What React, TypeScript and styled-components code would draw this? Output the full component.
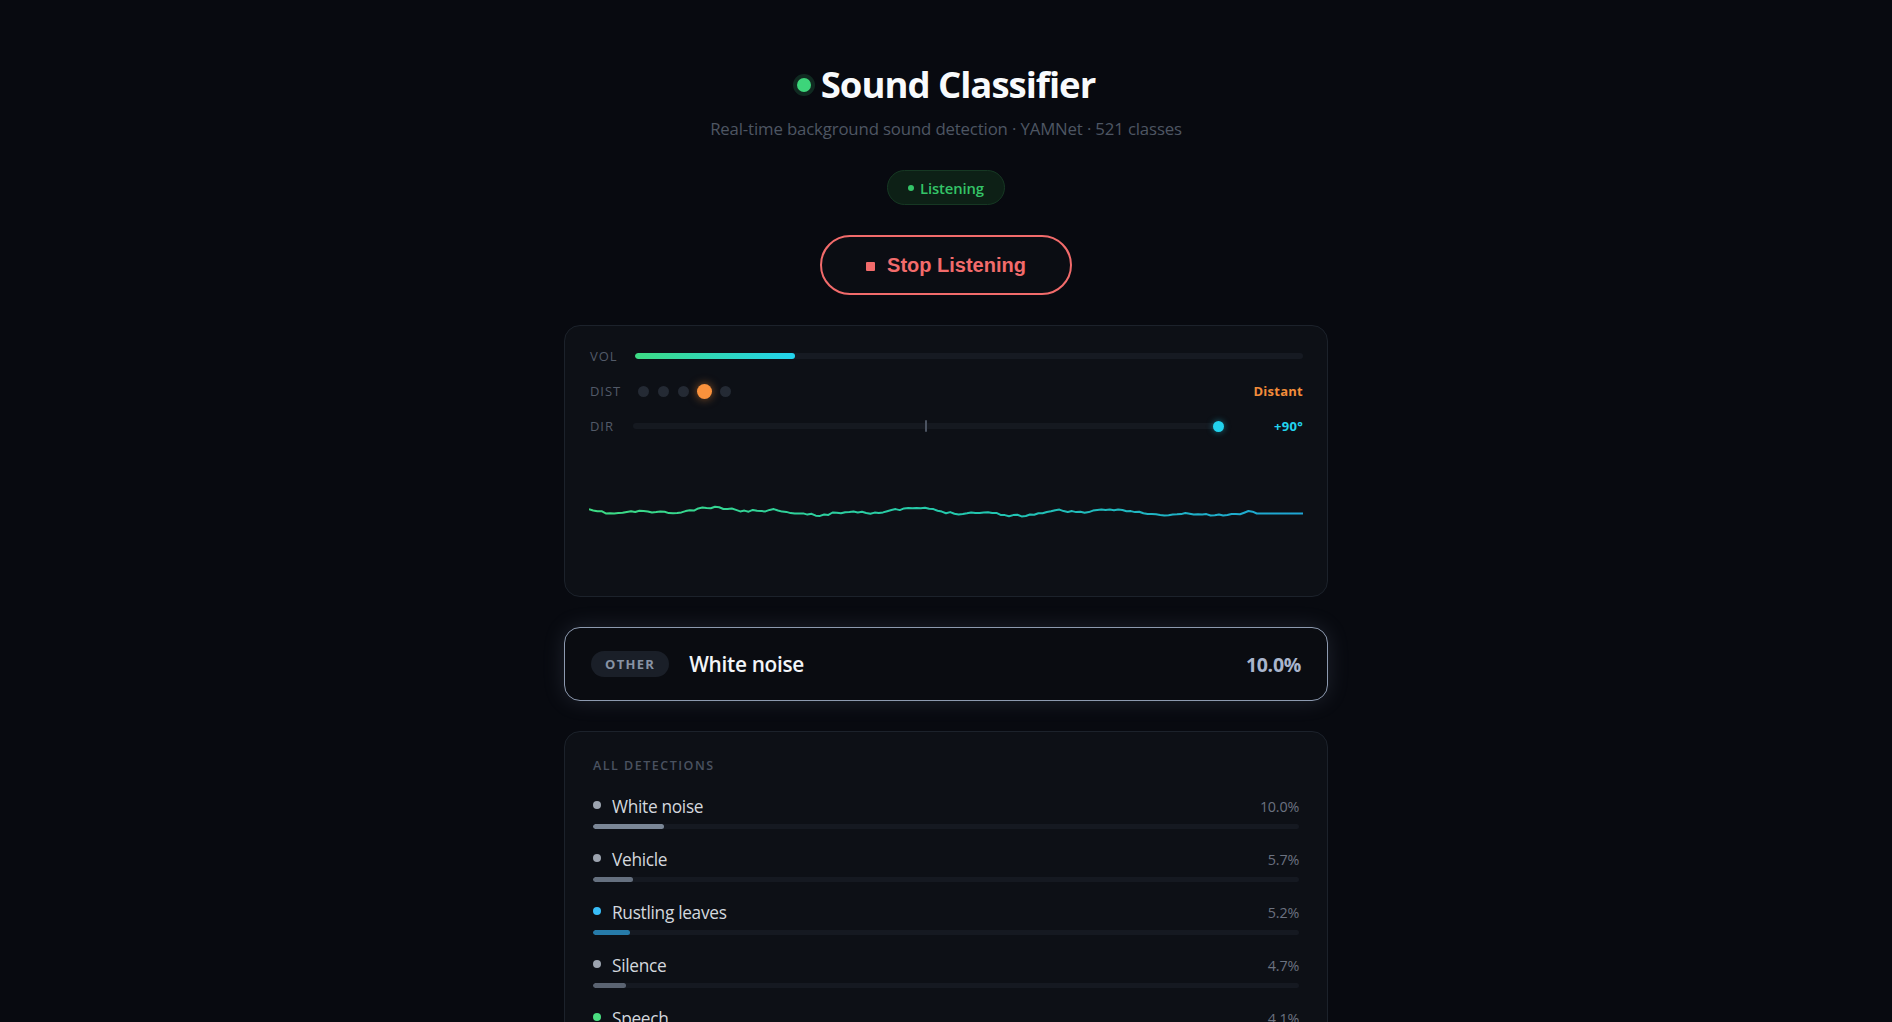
import React from 'react';
import styled, { createGlobalStyle } from 'styled-components';

type Detection = {
  name: string
  score: number
  color: string
  bar: string
  barOpacity: number
}

const detections: Detection[] = [
  { name: 'White noise', score: 10.0, color: '#9ca3af', bar: '#8592a3', barOpacity: 0.9 },
  { name: 'Vehicle', score: 5.7, color: '#9ca3af', bar: '#8592a3', barOpacity: 0.72 },
  { name: 'Rustling leaves', score: 5.2, color: '#38bdf8', bar: '#2a93cc', barOpacity: 0.8 },
  { name: 'Silence', score: 4.7, color: '#9ca3af', bar: '#8592a3', barOpacity: 0.62 },
  { name: 'Speech', score: 4.1, color: '#4ade80', bar: '#3fbf72', barOpacity: 0.6 },
  { name: 'Wind', score: 3.2, color: '#38bdf8', bar: '#2a93cc', barOpacity: 0.55 },
]

// small seeded generator so the trace looks the same on every render
const makeWave = (width: number, mid: number) => {
  let seed = 11;
  const rand = () => {
    seed = (seed * 16807) % 2147483647;
    return seed / 2147483647;
  };
  const pts: string[] = [];
  const steps = 170;
  const flatFrom = width * 0.935;
  let y = mid - 3;
  for (let i = 0; i <= steps; i++) {
    const x = (i / steps) * width;
    if (x > flatFrom) {
      pts.push(`${x.toFixed(1)},${mid.toFixed(1)}`);
      continue;
    }
    const drift = Math.sin(i / 7) * 2.2 + Math.sin(i / 2.6) * 1.5;
    const target = mid + drift + (rand() - 0.5) * 3.6 - (1 - i / steps) * 3;
    y = y * 0.35 + target * 0.65;
    pts.push(`${x.toFixed(1)},${y.toFixed(1)}`);
  }
  return pts.join(' ');
};

const WAVE_W = 714;
const WAVE_H = 125;
const wavePoints = makeWave(WAVE_W, WAVE_H / 2);

const App: React.FC = () => {
  const distance = 3;
  return (
    <>
      <GlobalStyle />
      <Page>
        <Column>
          <Header>
            <Title>
              <LiveDot />
              Sound Classifier
            </Title>
            <Subtitle>Real-time background sound detection · YAMNet · 521 classes</Subtitle>
          </Header>

          <StatusBadge>
            <BadgeDot />
            Listening
          </StatusBadge>

          <StopButton>
            <StopSquare />
            Stop Listening
          </StopButton>

          <Panel $padX={24} $padY={20}>
            <MeterRow>
              <MeterLabel>VOL</MeterLabel>
              <Track>
                <VolumeFill style={{ width: '24%' }} />
              </Track>
            </MeterRow>
            <MeterRow>
              <MeterLabel>DIST</MeterLabel>
              <Dots>
                {[0, 1, 2, 3, 4].map((i) => (
                  <DistDot key={`dist-${i}`} $active={i === distance} />
                ))}
              </Dots>
              <MeterValue $color="#f28c3a">Distant</MeterValue>
            </MeterRow>
            <MeterRow>
              <MeterLabel>DIR</MeterLabel>
              <DirTrack>
                <CenterTick />
                <DirKnob style={{ left: '100%' }} />
              </DirTrack>
              <MeterValue $color="#22d3ee">+90°</MeterValue>
            </MeterRow>
            <Wave viewBox={`0 0 ${WAVE_W} ${WAVE_H}`} preserveAspectRatio="none">
              <defs>
                <linearGradient id="waveGrad" x1="0" x2="1" y1="0" y2="0">
                  <stop offset="0%" stopColor="#3ddc84" />
                  <stop offset="55%" stopColor="#22c7b0" />
                  <stop offset="100%" stopColor="#1ea5d4" />
                </linearGradient>
              </defs>
              <polyline
                points={wavePoints}
                fill="none"
                stroke="url(#waveGrad)"
                strokeWidth="2"
                strokeLinejoin="round"
              />
            </Wave>
          </Panel>

          <HeroCard>
            <CategoryPill>OTHER</CategoryPill>
            <HeroName>White noise</HeroName>
            <HeroScore>10.0%</HeroScore>
          </HeroCard>

          <Panel $padX={28} $padY={24}>
            <SectionTitle>ALL DETECTIONS</SectionTitle>
            <List>
              {detections.map((d) => (
                <Item key={`det-${d.name}`}>
                  <ItemHead>
                    <ItemDot $color={d.color} />
                    <ItemName>{d.name}</ItemName>
                    <ItemScore>{d.score.toFixed(1)}%</ItemScore>
                  </ItemHead>
                  <ItemTrack>
                    <ItemFill
                      $color={d.bar}
                      style={{ width: `${d.score}%`, opacity: d.barOpacity }}
                    />
                  </ItemTrack>
                </Item>
              ))}
            </List>
          </Panel>
        </Column>
      </Page>
    </>
  )
}

const GlobalStyle = createGlobalStyle`
  html, body {
    margin: 0;
    padding: 0;
    background: #080a10;
  }
  body {
    font-family: "Open Sans", "Noto Sans", sans-serif;
    color: #e5e7eb;
  }
  * {
    box-sizing: border-box;
  }
`

const Page = styled.div`
  min-height: 100vh;
  background: #080a10;
  display: flex;
  justify-content: center;
  padding: 58px 0 60px;
`

const Column = styled.div`
  width: 764px;
  display: flex;
  flex-direction: column;
  align-items: center;
`

const Header = styled.div`
  display: flex;
  flex-direction: column;
  align-items: center;
`

const Title = styled.h1`
  margin: 0;
  display: flex;
  align-items: center;
  gap: 10px;
  font-size: 36.5px;
  line-height: 52px;
  font-weight: 700;
  letter-spacing: -1px;
  color: #f8fafc;
`

const LiveDot = styled.span`
  width: 14px;
  height: 14px;
  border-radius: 50%;
  background: #3dd57a;
  box-shadow: 0 0 0 4px rgba(61, 213, 122, 0.16);
  margin-top: 2px;
`

const Subtitle = styled.p`
  margin: 7px 0 0;
  font-size: 16.8px;
  line-height: 24px;
  color: #4e5663;
  letter-spacing: -0.15px;
`

const StatusBadge = styled.div`
  margin-top: 29px;
  height: 35px;
  display: flex;
  align-items: center;
  gap: 6px;
  padding: 0 20px 0 20px;
  border-radius: 18px;
  background: #0d2016;
  border: 1px solid #163823;
  color: #34c468;
  font-size: 14.8px;
  font-weight: 600;
  letter-spacing: -0.1px;
`

const BadgeDot = styled.span`
  width: 6px;
  height: 6px;
  border-radius: 50%;
  background: #34c468;
`

const StopButton = styled.button`
  margin-top: 30px;
  height: 60px;
  width: 252px;
  display: flex;
  align-items: center;
  justify-content: center;
  gap: 12px;
  border: 2px solid #f26b6b;
  border-radius: 30px;
  background: #0b0d13;
  color: #f26b6b;
  font-family: "Liberation Sans", Arial, sans-serif;
  font-size: 20px;
  font-weight: 700;
  cursor: pointer;
`

const StopSquare = styled.span`
  width: 9px;
  height: 9px;
  background: #f26b6b;
  border-radius: 1px;
  margin-top: 2px;
`

const Panel = styled.section<{ $padX: number; $padY: number }>`
  margin-top: 30px;
  width: 100%;
  display: flex;
  flex-direction: column;
  gap: 15px;
  padding: ${({ $padY }) => $padY}px ${({ $padX }) => $padX}px;
  background: #0d1016;
  border: 1px solid #1c222b;
  border-radius: 16px;
`

const MeterRow = styled.div`
  height: 20px;
  display: flex;
  align-items: center;
  gap: 8px;
`

const MeterLabel = styled.span`
  width: 36px;
  flex-shrink: 0;
  font-size: 13px;
  font-weight: 500;
  letter-spacing: 0.07em;
  color: #525a68;
  padding-left: 1px;
`

const Track = styled.div`
  flex: 1;
  height: 6px;
  margin-left: 2px;
  border-radius: 3px;
  background: #161a22;
  overflow: hidden;
`

const VolumeFill = styled.div`
  height: 100%;
  border-radius: 3px;
  background: linear-gradient(90deg, #3ddc84, #22d3ee);
`

const Dots = styled.div`
  flex: 1;
  display: flex;
  align-items: center;
  gap: 9px;
  padding-left: 5px;
`

const DistDot = styled.span<{ $active?: boolean }>`
  width: ${({ $active }) => ($active ? 15 : 11)}px;
  height: ${({ $active }) => ($active ? 15 : 11)}px;
  margin: 0 ${({ $active }) => ($active ? -1 : 0)}px;
  border-radius: 50%;
  background: ${({ $active }) => ($active ? '#fb923c' : '#242a34')};
  box-shadow: ${({ $active }) => ($active ? '0 0 10px rgba(251, 146, 60, 0.55)' : 'none')};
`

const MeterValue = styled.span<{ $color: string }>`
  width: 66px;
  flex-shrink: 0;
  text-align: right;
  font-size: 13px;
  font-weight: 700;
  letter-spacing: 0.02em;
  color: ${({ $color }) => $color};
`

const DirTrack = styled.div`
  position: relative;
  flex: 1;
  height: 6px;
  margin-right: 11px;
  border-radius: 3px;
  background: #151920;
`

const CenterTick = styled.span`
  position: absolute;
  left: 50%;
  top: -3px;
  width: 2px;
  height: 12px;
  margin-left: -1px;
  background: #4b5361;
  border-radius: 1px;
`

const DirKnob = styled.span`
  position: absolute;
  top: 50%;
  width: 11px;
  height: 11px;
  margin: -5.5px 0 0 -5.5px;
  border-radius: 50%;
  background: #22d3ee;
  box-shadow: 0 0 6px rgba(34, 211, 238, 0.5);
`

const Wave = styled.svg`
  display: block;
  width: 100%;
  height: ${WAVE_H}px;
`

const HeroCard = styled.div`
  margin-top: 30px;
  width: 100%;
  height: 74px;
  display: flex;
  align-items: center;
  padding: 0 26px;
  border: 1px solid #8d9ab0;
  border-radius: 16px;
  background: #0a0c11;
  box-shadow: 0 0 22px rgba(148, 163, 184, 0.16);
`

const CategoryPill = styled.span`
  height: 26px;
  padding: 0 14px;
  display: flex;
  align-items: center;
  border-radius: 13px;
  background: #1a1f28;
  color: #8893a4;
  font-size: 13px;
  font-weight: 700;
  letter-spacing: 0.1em;
`

const HeroName = styled.span`
  margin-left: 20px;
  flex: 1;
  font-size: 20.8px;
  font-weight: 600;
  color: #f3f5f8;
  letter-spacing: -0.3px;
`

const HeroScore = styled.span`
  font-size: 19.5px;
  font-weight: 700;
  color: #a9b5cc;
  letter-spacing: -0.3px;
`

const SectionTitle = styled.h2`
  margin: 2px 0 0;
  font-size: 12.5px;
  line-height: 16px;
  font-weight: 600;
  letter-spacing: 0.12em;
  color: #4a5260;
`

const List = styled.div`
  margin-top: 6px;
  display: flex;
  flex-direction: column;
  gap: 19px;
`

const Item = styled.div`
  display: flex;
  flex-direction: column;
  gap: 7px;
`

const ItemHead = styled.div`
  height: 22px;
  display: flex;
  align-items: center;
`

const ItemDot = styled.span<{ $color: string }>`
  width: 8px;
  height: 8px;
  border-radius: 50%;
  background: ${({ $color }) => $color};
  margin-top: -2px;
`

const ItemName = styled.span`
  margin-left: 11px;
  flex: 1;
  font-size: 17.3px;
  color: #d4d8de;
  letter-spacing: -0.3px;
`

const ItemScore = styled.span`
  font-size: 14.3px;
  color: #6b7280;
  letter-spacing: -0.2px;
`

const ItemTrack = styled.div`
  height: 5px;
  border-radius: 3px;
  background: #151921;
  overflow: hidden;
`

const ItemFill = styled.div<{ $color: string }>`
  height: 100%;
  border-radius: 3px;
  background: ${({ $color }) => $color};
`

export default App;
